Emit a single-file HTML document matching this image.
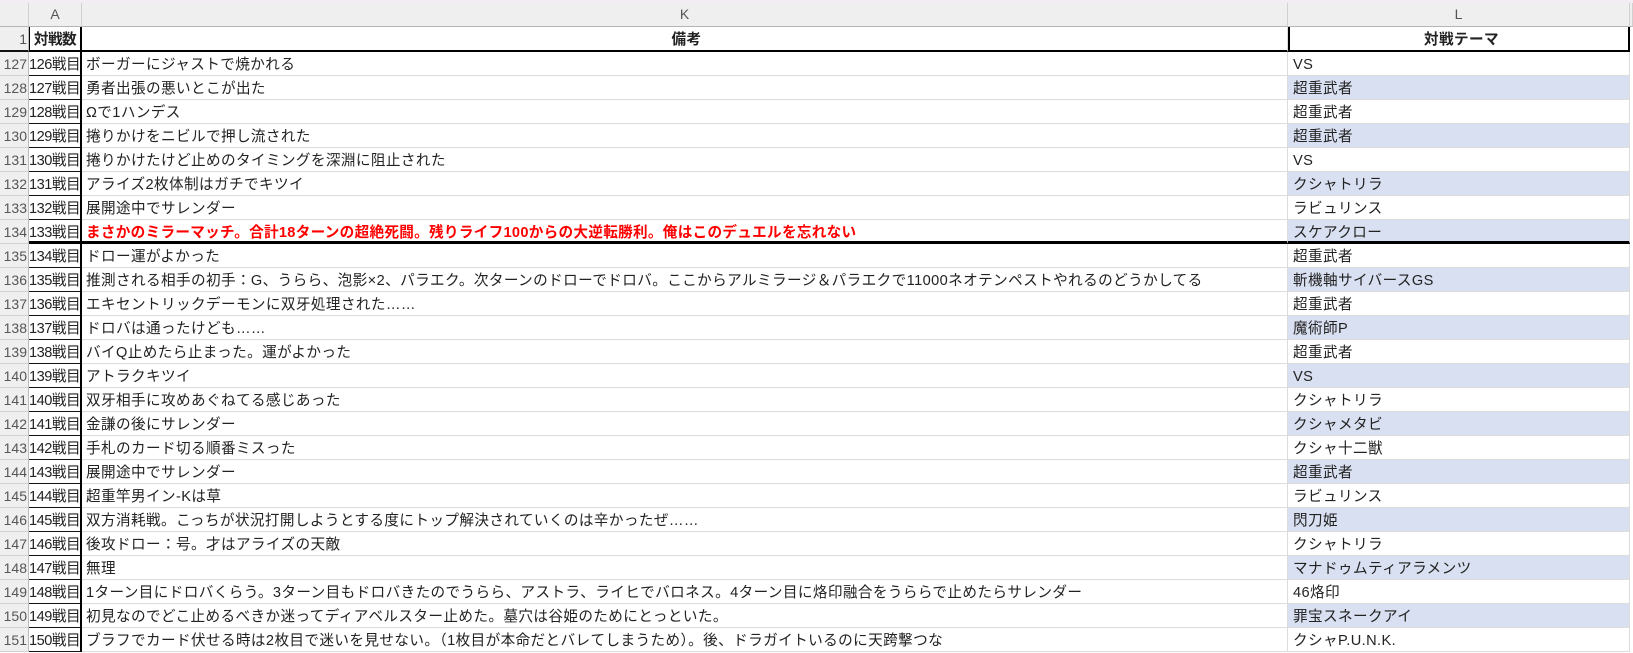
<!DOCTYPE html>
<html><head><meta charset="utf-8"><style>
*{margin:0;padding:0;box-sizing:border-box}
body{width:1633px;height:653px;overflow:hidden;background:#fff;font-family:"Liberation Sans","Noto Sans CJK JP",sans-serif;font-size:14.6px;color:#222;position:relative}
.top{position:absolute;left:0;top:0;width:1633px;height:3px;background:#f1edf2}
.hdr{position:absolute;top:3px;height:24px;background:#efefef;border-right:1px solid #d0d0d0;border-bottom:1px solid #b5b5b5;color:#555;font-size:14px;text-align:center;line-height:23px}
.row{position:absolute;left:0;width:1633px;height:24px}
.c{position:absolute;top:0;height:100%;border-bottom:1px solid #dcdcdc;border-right:1px solid #dcdcdc;white-space:nowrap;overflow:hidden;line-height:20px;padding-top:3px;padding-left:4px;letter-spacing:0.4px}
.n{left:0;width:29px;background:#efefef;color:#555;text-align:right;padding:2px 1px 0 0;line-height:20px;border-right:1px solid #bbb;border-bottom:1px solid #d0d0d0;letter-spacing:0;font-size:14px}
.a{left:29px;width:53px;border-bottom:1px solid #111;border-right:2px solid #000;padding-left:0;letter-spacing:-0.5px}
.k{left:82px;width:1206px}
.l{left:1288px;width:342px;padding-left:5px}
.b .l{background:#d9e0f1}
.red{color:#f00;font-weight:bold;letter-spacing:0.3px}
</style></head><body>
<div class="top"></div>
<div class="hdr" style="left:0;width:29px;"></div>
<div class="hdr" style="left:29px;width:53px">A</div>
<div class="hdr" style="left:82px;width:1206px">K</div>
<div class="hdr" style="left:1288px;width:342px">L</div>
<div class="hdr" style="left:1630px;width:3px"></div>

<div class="row" style="top:27px;height:25px">
<div class="c n" style="border-bottom:2px solid #111">1</div>
<div class="c a" style="font-weight:bold;text-align:center;border-bottom:2px solid #000;border-left:1px solid #000">対戦数</div>
<div class="c k" style="font-weight:bold;text-align:center;border-bottom:2px solid #000">備考</div>
<div class="c l" style="font-weight:bold;text-align:center;border-bottom:2px solid #000;border-left:2px solid #000;border-right:2px solid #000">対戦テーマ</div>
</div>

<div class="row" style="top:52px"><div class="c n">127</div><div class="c a">126戦目</div><div class="c k">ボーガーにジャストで焼かれる</div><div class="c l">VS</div></div>
<div class="row b" style="top:76px"><div class="c n">128</div><div class="c a">127戦目</div><div class="c k">勇者出張の悪いとこが出た</div><div class="c l">超重武者</div></div>
<div class="row" style="top:100px"><div class="c n">129</div><div class="c a">128戦目</div><div class="c k">Ωで1ハンデス</div><div class="c l">超重武者</div></div>
<div class="row b" style="top:124px"><div class="c n">130</div><div class="c a">129戦目</div><div class="c k">捲りかけをニビルで押し流された</div><div class="c l">超重武者</div></div>
<div class="row" style="top:148px"><div class="c n">131</div><div class="c a">130戦目</div><div class="c k">捲りかけたけど止めのタイミングを深淵に阻止された</div><div class="c l">VS</div></div>
<div class="row b" style="top:172px"><div class="c n">132</div><div class="c a">131戦目</div><div class="c k">アライズ2枚体制はガチでキツイ</div><div class="c l">クシャトリラ</div></div>
<div class="row" style="top:196px"><div class="c n">133</div><div class="c a">132戦目</div><div class="c k">展開途中でサレンダー</div><div class="c l">ラビュリンス</div></div>
<div class="row b" style="top:220px"><div class="c n">134</div><div class="c a" style="border-bottom:3px solid #000">133戦目</div><div class="c k red" style="border-bottom:3px solid #000">まさかのミラーマッチ。合計18ターンの超絶死闘。残りライフ100からの大逆転勝利。俺はこのデュエルを忘れない</div><div class="c l" style="border-bottom:3px solid #000">スケアクロー</div></div>
<div class="row" style="top:244px"><div class="c n">135</div><div class="c a">134戦目</div><div class="c k">ドロー運がよかった</div><div class="c l">超重武者</div></div>
<div class="row b" style="top:268px"><div class="c n">136</div><div class="c a">135戦目</div><div class="c k">推測される相手の初手：G、うらら、泡影×2、パラエク。次ターンのドローでドロバ。ここからアルミラージ＆パラエクで11000ネオテンペストやれるのどうかしてる</div><div class="c l">斬機軸サイバースGS</div></div>
<div class="row" style="top:292px"><div class="c n">137</div><div class="c a">136戦目</div><div class="c k">エキセントリックデーモンに双牙処理された……</div><div class="c l">超重武者</div></div>
<div class="row b" style="top:316px"><div class="c n">138</div><div class="c a">137戦目</div><div class="c k">ドロバは通ったけども……</div><div class="c l">魔術師P</div></div>
<div class="row" style="top:340px"><div class="c n">139</div><div class="c a">138戦目</div><div class="c k">バイQ止めたら止まった。運がよかった</div><div class="c l">超重武者</div></div>
<div class="row b" style="top:364px"><div class="c n">140</div><div class="c a">139戦目</div><div class="c k">アトラクキツイ</div><div class="c l">VS</div></div>
<div class="row" style="top:388px"><div class="c n">141</div><div class="c a">140戦目</div><div class="c k">双牙相手に攻めあぐねてる感じあった</div><div class="c l">クシャトリラ</div></div>
<div class="row b" style="top:412px"><div class="c n">142</div><div class="c a">141戦目</div><div class="c k">金謙の後にサレンダー</div><div class="c l">クシャメタビ</div></div>
<div class="row" style="top:436px"><div class="c n">143</div><div class="c a">142戦目</div><div class="c k">手札のカード切る順番ミスった</div><div class="c l">クシャ十二獣</div></div>
<div class="row b" style="top:460px"><div class="c n">144</div><div class="c a">143戦目</div><div class="c k">展開途中でサレンダー</div><div class="c l">超重武者</div></div>
<div class="row" style="top:484px"><div class="c n">145</div><div class="c a">144戦目</div><div class="c k">超重竿男イン-Kは草</div><div class="c l">ラビュリンス</div></div>
<div class="row b" style="top:508px"><div class="c n">146</div><div class="c a">145戦目</div><div class="c k">双方消耗戦。こっちが状況打開しようとする度にトップ解決されていくのは辛かったぜ……</div><div class="c l">閃刀姫</div></div>
<div class="row" style="top:532px"><div class="c n">147</div><div class="c a">146戦目</div><div class="c k">後攻ドロー：号。才はアライズの天敵</div><div class="c l">クシャトリラ</div></div>
<div class="row b" style="top:556px"><div class="c n">148</div><div class="c a">147戦目</div><div class="c k">無理</div><div class="c l">マナドゥムティアラメンツ</div></div>
<div class="row" style="top:580px"><div class="c n">149</div><div class="c a">148戦目</div><div class="c k">1ターン目にドロバくらう。3ターン目もドロバきたのでうらら、アストラ、ライヒでバロネス。4ターン目に烙印融合をうららで止めたらサレンダー</div><div class="c l">46烙印</div></div>
<div class="row b" style="top:604px"><div class="c n">150</div><div class="c a">149戦目</div><div class="c k">初見なのでどこ止めるべきか迷ってディアベルスター止めた。墓穴は谷姫のためにとっといた。</div><div class="c l">罪宝スネークアイ</div></div>
<div class="row" style="top:628px"><div class="c n">151</div><div class="c a">150戦目</div><div class="c k">ブラフでカード伏せる時は2枚目で迷いを見せない。（1枚目が本命だとバレてしまうため）。後、ドラガイトいるのに天跨撃つな</div><div class="c l">クシャP.U.N.K.</div></div>
</body></html>
